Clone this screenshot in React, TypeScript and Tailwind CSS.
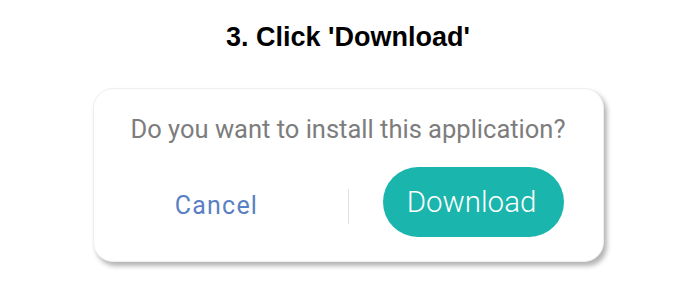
export default function App() {
  return (
    <div className="w-[696px] h-[294px] bg-white flex flex-col items-center">
      <h1 className="pt-[24px] text-[27px] leading-none font-bold text-black font-['Liberation_Sans',Arial,sans-serif]">
        3. Click 'Download'
      </h1>
      <div className="mt-[37px] w-[511px] rounded-[20px] bg-white border border-[#eeeeee] shadow-[3px_4px_5px_rgba(0,0,0,0.3)] pt-[28px] pb-[24px] font-['Roboto',sans-serif]">
        <p className="text-center text-[25.5px] leading-none text-[#7d7d7d]">
          Do you want to install this application?
        </p>
        <div className="mt-[24px] flex items-center">
          <div className="flex-1 flex justify-center pt-[8px]">
            <button className="mr-[8px] text-[25px] leading-none text-[#5b7fc5] tracking-[1.2px]">
              Cancel
            </button>
          </div>
          <div className="w-px h-[35px] mt-[9px] bg-[#e2e2e2]" />
          <div className="flex-1 flex justify-center">
            <button className="mr-[4px] w-[181px] h-[70px] rounded-full bg-[#1ab5ac] text-white text-[29.5px] font-light leading-none pt-[3px] pr-[4px]">
              Download
            </button>
          </div>
        </div>
      </div>
    </div>
  );
}
